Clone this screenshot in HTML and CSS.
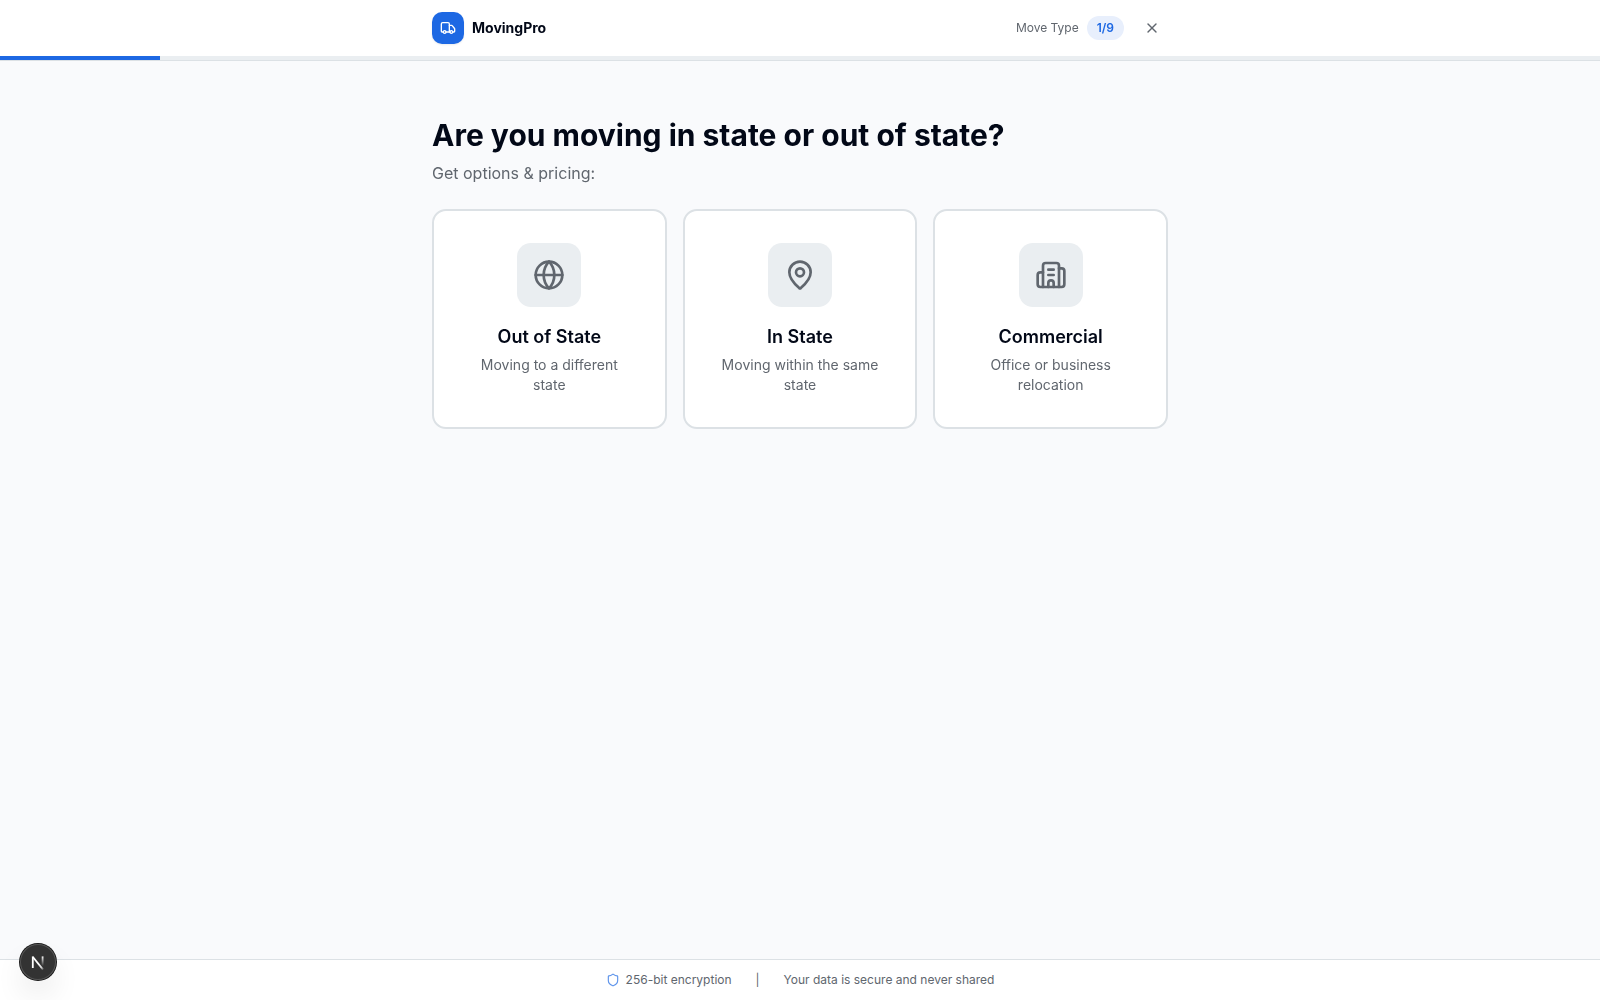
FILE: index.html
```
<!DOCTYPE html>
<html lang="en">

<head>
    <meta charset="UTF-8">
    <meta name="viewport" content="width=device-width, initial-scale=1.0">
    <title>MovingPro</title>
    <link rel="stylesheet" href="styles.css">
</head>

<body>
    <header class="header">
        <div class="container header-row">
            <div class="brand">
                <span class="brand-logo">
                    <svg class="icon" width="16" height="16" viewBox="0 0 24 24">
                        <path d="M14 18V6a2 2 0 0 0-2-2H4a2 2 0 0 0-2 2v11a1 1 0 0 0 1 1h2" />
                        <path d="M15 18H9" />
                        <path d="M19 18h2a1 1 0 0 0 1-1v-3.65a1 1 0 0 0-.22-.624l-3.48-4.35A1 1 0 0 0 17.52 8H14" />
                        <circle cx="17" cy="18" r="2" />
                        <circle cx="7" cy="18" r="2" />
                    </svg>
                </span>
                <span class="brand-name">MovingPro</span>
            </div>
            <div class="step">
                <span class="step-name">Move Type</span>
                <span class="step-count">1/9</span>
                <button class="close" aria-label="Close">
                    <svg class="icon" width="16" height="16" viewBox="0 0 24 24">
                        <path d="M18 6 6 18" />
                        <path d="m6 6 12 12" />
                    </svg>
                </button>
            </div>
        </div>
        <div class="progress">
            <div class="progress-bar"></div>
        </div>
    </header>

    <main class="main">
        <div class="container">
            <h1 class="title">Are you moving in state or out of state?</h1>
            <p class="subtitle">Get options &amp; pricing:</p>
            <div class="cards">
                <button class="card">
                    <span class="card-icon">
                        <svg class="icon" width="32" height="32" viewBox="0 0 24 24">
                            <circle cx="12" cy="12" r="10" />
                            <path d="M12 2a14.5 14.5 0 0 0 0 20 14.5 14.5 0 0 0 0-20" />
                            <path d="M2 12h20" />
                        </svg>
                    </span>
                    <span class="card-title">Out of State</span>
                    <span class="card-text">Moving to a different state</span>
                </button>
                <button class="card">
                    <span class="card-icon">
                        <svg class="icon" width="32" height="32" viewBox="0 0 24 24">
                            <path d="M20 10c0 4.993-5.539 10.193-7.399 11.799a1 1 0 0 1-1.202 0C9.539 20.193 4 14.993 4 10a8 8 0 0 1 16 0" />
                            <circle cx="12" cy="10" r="3" />
                        </svg>
                    </span>
                    <span class="card-title">In State</span>
                    <span class="card-text">Moving within the same state</span>
                </button>
                <button class="card">
                    <span class="card-icon">
                        <svg class="icon" width="32" height="32" viewBox="0 0 24 24">
                            <path d="M10 12h4" />
                            <path d="M10 8h4" />
                            <path d="M14 21v-3a2 2 0 0 0-4 0v3" />
                            <path d="M6 10H4a2 2 0 0 0-2 2v7a2 2 0 0 0 2 2h16a2 2 0 0 0 2-2V9a2 2 0 0 0-2-2h-2" />
                            <path d="M6 21V5a2 2 0 0 1 2-2h8a2 2 0 0 1 2 2v16" />
                        </svg>
                    </span>
                    <span class="card-title">Commercial</span>
                    <span class="card-text">Office or business relocation</span>
                </button>
            </div>
        </div>
    </main>

    <footer class="footer">
        <span class="secure">
            <svg class="icon" width="14" height="14" viewBox="0 0 24 24">
                <path d="M20 13c0 5-3.5 7.5-7.66 8.95a1 1 0 0 1-.67-.01C7.5 20.5 4 18 4 13V6a1 1 0 0 1 1-1c2 0 4.5-1.2 6.24-2.72a1.17 1.17 0 0 1 1.52 0C14.51 3.81 17 5 19 5a1 1 0 0 1 1 1z" />
            </svg>
            256-bit encryption
        </span>
        <span>|</span>
        <span>Your data is secure and never shared</span>
    </footer>

    <!-- dev tools badge -->
    <div class="badge">
        <svg width="40" height="40" viewBox="0 0 40 40" fill="none">
            <defs>
                <linearGradient id="diagonal" x1="22" y1="21" x2="26" y2="27.5" gradientUnits="userSpaceOnUse">
                    <stop stop-color="#fff" />
                    <stop offset="0.6" stop-color="#fff" stop-opacity="0.8" />
                    <stop offset="1" stop-color="#fff" stop-opacity="0.1" />
                </linearGradient>
                <linearGradient id="stem" x1="25" y1="14" x2="25" y2="24" gradientUnits="userSpaceOnUse">
                    <stop stop-color="#fff" />
                    <stop offset="1" stop-color="#fff" stop-opacity="0" />
                </linearGradient>
            </defs>
            <path d="M14.9 15l10.2 12.6" stroke="url(#diagonal)" stroke-width="1.8" />
            <path d="M14.8 26V14.4" stroke="#fff" stroke-width="1.8" />
            <path d="M24.6 14.4v10" stroke="url(#stem)" stroke-width="1.8" />
        </svg>
    </div>
</body>

</html>
```

FILE: styles.css
```
* {
    padding: 0;
    margin: 0;
    box-sizing: border-box;
}

body {
    display: flex;
    flex-direction: column;
    min-height: 100vh;
    background: #f9fafc;
    color: #020817;
    font-family: Inter, "Liberation Sans", sans-serif;
    line-height: 1.5;
}

button {
    background: none;
    border: 0;
    color: inherit;
    font: inherit;
    cursor: pointer;
}

.icon {
    display: block;
    flex-shrink: 0;
    fill: none;
    stroke: currentColor;
    stroke-width: 2;
    stroke-linecap: round;
    stroke-linejoin: round;
}

.container {
    width: 100%;
    max-width: 768px;
    margin: 0 auto;
    padding: 0 16px;
}

.header {
    background: #fff;
    border-bottom: 1px solid #dce1e5;
}

.header-row {
    display: flex;
    align-items: center;
    justify-content: space-between;
    height: 56px;
    will-change: transform;
}

.brand {
    display: flex;
    align-items: center;
    gap: 8px;
}

.brand-logo {
    display: flex;
    align-items: center;
    justify-content: center;
    width: 32px;
    height: 32px;
    border-radius: 10px;
    background: #1d68e3;
    color: #fff;
    box-shadow: 0 1px 2px rgba(0, 0, 0, 0.08);
}

.brand-name {
    font-size: 14px;
    font-weight: 700;
    line-height: 20px;
}

.step {
    display: flex;
    align-items: center;
    gap: 8px;
    font-size: 12px;
    line-height: 16px;
}

.step-name {
    color: #60666e;
}

.step-count {
    padding: 4px 10px;
    border-radius: 12px;
    background: #e8effc;
    color: #1d68e3;
    font-weight: 600;
}

.close {
    display: flex;
    align-items: center;
    justify-content: center;
    width: 32px;
    height: 32px;
    margin-left: 4px;
    color: #60666e;
}

.progress {
    height: 4px;
    background: #eaeef1;
}

.progress-bar {
    width: 10%;
    height: 100%;
    background: #1d68e3;
}

.main {
    flex: 1;
    padding: 56px 0 32px;
    will-change: transform;
}

.title {
    font-size: 30px;
    font-weight: 700;
    line-height: 36px;
}

.subtitle {
    margin: 8px 0 24px;
    color: #60666e;
    font-size: 16px;
    line-height: 24px;
}

.cards {
    display: grid;
    grid-template-columns: repeat(3, 1fr);
    gap: 16px;
}

.card {
    display: flex;
    flex-direction: column;
    align-items: center;
    padding: 32px;
    border: 2px solid #dce1e5;
    border-radius: 14px;
    background: #fff;
    text-align: center;
}

.card-icon {
    display: flex;
    align-items: center;
    justify-content: center;
    width: 64px;
    height: 64px;
    margin-bottom: 16px;
    border-radius: 14px;
    background: #eaeef1;
    color: #60666e;
}

.card-title {
    margin-bottom: 4px;
    font-size: 18px;
    font-weight: 600;
    line-height: 28px;
}

.card-text {
    color: #60666e;
    font-size: 14px;
    line-height: 20px;
}

.footer {
    display: flex;
    align-items: center;
    justify-content: center;
    gap: 24px;
    padding: 12px 16px;
    border-top: 1px solid #dce1e5;
    background: #fff;
    color: #60666e;
    font-size: 12px;
    line-height: 16px;
}

.secure {
    display: flex;
    align-items: center;
    gap: 6px;
}

.secure .icon {
    color: #5f95eb;
}

.badge {
    position: fixed;
    left: 18px;
    bottom: 18px;
    width: 40px;
    height: 40px;
}

.badge svg {
    display: block;
    width: 40px;
    height: 40px;
}

.badge::before {
    content: "";
    position: absolute;
    z-index: -1;
    top: 2px;
    left: 2px;
    width: 36px;
    height: 36px;
    border-radius: 50%;
    background: #333;
    box-shadow: 0 0 0 1px #171717, inset 0 0 0 1px #555, 0 16px 32px -8px rgba(0, 0, 0, 0.24);
}
```
